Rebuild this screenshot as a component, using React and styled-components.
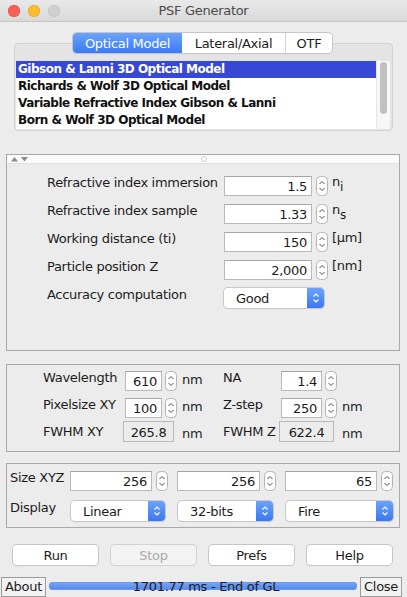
import styled, { createGlobalStyle } from "styled-components";

const GlobalStyle = createGlobalStyle`
  html, body {
    margin: 0;
    padding: 0;
    background: #ececec;
  }
  body {
    font-family: "DejaVu Sans", "Lucida Grande", sans-serif;
    font-size: 13px;
    letter-spacing: -0.3px;
    color: #1c1c1c;
  }
`;

const models = [
  "Gibson & Lanni 3D Optical Model",
  "Richards & Wolf 3D Optical Model",
  "Variable Refractive Index Gibson & Lanni",
  "Born & Wolf 3D Optical Model",
];

function Spinner() {
  return (
    <SpinBox>
      <svg width="12" height="20" viewBox="0 0 12 20">
        <rect x="0.5" y="0.5" width="11" height="19" rx="4" fill="#fff" stroke="#b4b4b4" />
        <path d="M3.5 8 L6 5.5 L8.5 8" fill="none" stroke="#4a4a4a" strokeWidth="1" />
        <path d="M3.5 12 L6 14.5 L8.5 12" fill="none" stroke="#4a4a4a" strokeWidth="1" />
      </svg>
    </SpinBox>
  );
}

function Combo({ value, width }) {
  return (
    <ComboBox $width={width}>
      <span>{value}</span>
      <ComboArrow>
        <svg width="8" height="12" viewBox="0 0 8 12">
          <path d="M1.5 4.5 L4 2 L6.5 4.5" fill="none" stroke="#fff" strokeWidth="1.2" />
          <path d="M1.5 7.5 L4 10 L6.5 7.5" fill="none" stroke="#fff" strokeWidth="1.2" />
        </svg>
      </ComboArrow>
    </ComboBox>
  );
}

export default function App() {
  return (
    <Window>
      <GlobalStyle />
      <TitleBar>
        <Lights>
          <Light $color="#fc5f57" $edge="#de4a42" />
          <Light $color="#fdbc2e" $edge="#dea123" />
          <Light $color="#d0d0d0" $edge="#bdbdbd" />
        </Lights>
        <Title>PSF Generator</Title>
        <span />
      </TitleBar>

      <Tabs>
        <Tab $active $width={109}>Optical Model</Tab>
        <Tab $width={103}>Lateral/Axial</Tab>
        <Tab $width={46} $last>OTF</Tab>
      </Tabs>

      <TabPanel>
        <ModelList>
          <Items>
            {models.map((m, i) => (
              <Item key={m} $selected={i === 0}>{m}</Item>
            ))}
          </Items>
          <ScrollTrack>
            <ScrollThumb />
          </ScrollTrack>
        </ModelList>
      </TabPanel>

      <SplitBox>
        <Divider>
          <Arrows>
            <svg width="20" height="6" viewBox="0 0 20 6">
              <path d="M0 5.5 L3.5 1 L7 5.5 Z" fill="#8a8a8a" />
              <path d="M10 1 L17 1 L13.5 5.5 Z" fill="#8a8a8a" />
            </svg>
          </Arrows>
          <Knob />
        </Divider>
        <ParamGrid>
          <Label>Refractive index immersion</Label>
          <Field>1.5</Field>
          <Spinner />
          <Unit>n<Sub>i</Sub></Unit>

          <Label>Refractive index sample</Label>
          <Field>1.33</Field>
          <Spinner />
          <Unit>n<Sub>s</Sub></Unit>

          <Label>Working distance (ti)</Label>
          <Field>150</Field>
          <Spinner />
          <Unit>[µm]</Unit>

          <Label>Particle position Z</Label>
          <Field>2,000</Field>
          <Spinner />
          <Unit>[nm]</Unit>

          <Label>Accuracy computation</Label>
          <ComboCell>
            <Combo value="Good" width={100} />
          </ComboCell>
        </ParamGrid>
      </SplitBox>

      <Box $mt={13} $height={88}>
        <OpticsGrid>
          <Label>Wavelength</Label>
          <Field>610</Field>
          <Spinner />
          <PlainUnit>nm</PlainUnit>
          <Label>NA</Label>
          <Field>1.4</Field>
          <Spinner />
          <PlainUnit />

          <Label>Pixelsize XY</Label>
          <Field>100</Field>
          <Spinner />
          <PlainUnit>nm</PlainUnit>
          <Label>Z-step</Label>
          <Field>250</Field>
          <Spinner />
          <PlainUnit>nm</PlainUnit>

          <Label>FWHM XY</Label>
          <ReadOnly>265.8</ReadOnly>
          <PlainUnit>nm</PlainUnit>
          <Label>FWHM Z</Label>
          <ReadOnly>622.4</ReadOnly>
          <PlainUnit>nm</PlainUnit>
        </OpticsGrid>
      </Box>

      <Box $mt={11} $height={65}>
        <SizeGrid>
          <Label>Size XYZ</Label>
          <Cell $gap={9}>
            <Field>256</Field>
            <Spinner />
          </Cell>
          <Cell $gap={9}>
            <Field>256</Field>
            <Spinner />
          </Cell>
          <Cell $gap={0}>
            <Field>65</Field>
            <Spinner />
          </Cell>

          <Label>Display</Label>
          <Cell $gap={12}>
            <Combo value="Linear" />
          </Cell>
          <Cell $gap={12}>
            <Combo value="32-bits" />
          </Cell>
          <Cell $gap={0}>
            <Combo value="Fire" />
          </Cell>
        </SizeGrid>
      </Box>

      <Buttons>
        <Button>Run</Button>
        <Button $disabled>Stop</Button>
        <Button>Prefs</Button>
        <Button>Help</Button>
      </Buttons>

      <StatusBar>
        <SmallButton>About</SmallButton>
        <Progress>
          <ProgressText>1701.77 ms - End of GL</ProgressText>
        </Progress>
        <SmallButton>Close</SmallButton>
      </StatusBar>
    </Window>
  );
}

const Window = styled.div`
  width: 407px;
  height: 597px;
  background: #ececec;
  display: flex;
  flex-direction: column;
  overflow: hidden;
`;

const TitleBar = styled.div`
  height: 21px;
  border-bottom: 1px solid #c4c4c4;
  background: linear-gradient(#e9e9e9, #d9d9d9);
  display: grid;
  grid-template-columns: 1fr auto 1fr;
  align-items: center;
`;

const Lights = styled.div`
  display: flex;
  gap: 8px;
  padding-left: 8px;
`;

const Light = styled.span`
  width: 12px;
  height: 12px;
  border-radius: 50%;
  background: ${(p) => p.$color};
  box-shadow: inset 0 0 0 0.5px ${(p) => p.$edge};
`;

const Title = styled.div`
  color: #4a4a4a;
  font-size: 13px;
`;

const Tabs = styled.div`
  margin-top: 11px;
  height: 20px;
  align-self: center;
  margin-left: -2px;
  display: flex;
  background: #fff;
  border-radius: 4px;
  box-shadow: 0 0 0 1px #c6c6c6, 0 1px 1px rgba(0, 0, 0, 0.12);
  position: relative;
  z-index: 1;
`;

const Tab = styled.div`
  width: ${(p) => p.$width}px;
  display: flex;
  align-items: center;
  justify-content: center;
  color: ${(p) => (p.$active ? "#fff" : "#1c1c1c")};
  background: ${(p) => (p.$active ? "linear-gradient(#6ba3fb, #3a7af6)" : "transparent")};
  border-radius: ${(p) => (p.$active ? "4px 0 0 4px" : "0")};
  border-left: ${(p) => (p.$last ? "1px solid #d4d4d4" : "none")};
`;

const TabPanel = styled.div`
  margin: -10px 14px 0;
  border: 1px solid #d3d3d3;
  border-radius: 4px;
  background: #e4e4e4;
  padding: 17px 2px 1px 1px;
  box-sizing: content-box;
  height: 68px;
`;

const ModelList = styled.div`
  display: flex;
  height: 68px;
  background: #fff;
`;

const Items = styled.div`
  flex: 1;
  display: flex;
  flex-direction: column;
`;

const Item = styled.div`
  height: 17px;
  line-height: 17px;
  padding-left: 2px;
  font-size: 12px;
  font-weight: bold;
  letter-spacing: -0.5px;
  color: ${(p) => (p.$selected ? "#fff" : "#111")};
  background: ${(p) => (p.$selected ? "#3848d6" : "transparent")};
`;

const ScrollTrack = styled.div`
  width: 14px;
  background: #f7f7f7;
  border-left: 1px solid #e6e6e6;
  padding: 1px 3px 0 3px;
  box-sizing: border-box;
`;

const ScrollThumb = styled.div`
  height: 52px;
  border-radius: 4px;
  background: #c1c1c1;
`;

const SplitBox = styled.div`
  margin: 23px 7px 0 6px;
  height: 195px;
  border: 1px solid #a9a9a9;
  display: flex;
  flex-direction: column;
`;

const Divider = styled.div`
  height: 8px;
  background: #fbfbfb;
  border-bottom: 1px solid #e2e2e2;
  display: flex;
  align-items: center;
  justify-content: center;
  position: relative;
`;

const Arrows = styled.div`
  position: absolute;
  left: 4px;
  top: 1px;
  line-height: 0;
`;

const Knob = styled.span`
  width: 4px;
  height: 4px;
  border-radius: 50%;
  border: 1px solid #cfcfcf;
  margin-left: 2px;
`;

const ParamGrid = styled.div`
  display: grid;
  grid-template-columns: 173px 88px 12px auto;
  grid-auto-rows: 20px;
  column-gap: 4px;
  row-gap: 8px;
  padding: 12px 0 0 40px;
  align-items: start;
`;

const Label = styled.div`
  line-height: 14px;
  white-space: nowrap;
`;

const Field = styled.div`
  height: 20px;
  box-sizing: border-box;
  background: #fff;
  border: 1px solid #b9b9b9;
  border-top-color: #a6a6a6;
  text-align: right;
  padding-right: 4px;
  line-height: 20px;
  flex: 1;
`;

const SpinBox = styled.div`
  width: 12px;
  height: 20px;
  line-height: 0;
`;

const Unit = styled.div`
  line-height: 12px;
  white-space: nowrap;
`;

const Sub = styled.sub`
  font-size: 12px;
  vertical-align: -5px;
`;

const PlainUnit = styled.div`
  padding-left: 5px;
  line-height: 18px;
`;

const ComboCell = styled.div`
  grid-column: 2 / span 3;
`;

const ComboBox = styled.div`
  width: ${(p) => (p.$width ? `${p.$width}px` : "100%")};
  height: 20px;
  box-sizing: border-box;
  display: flex;
  align-items: center;
  background: #fff;
  border-radius: 4px;
  box-shadow: 0 0 0 1px #c8c8c8, 0 1px 1px rgba(0, 0, 0, 0.15);
  overflow: hidden;

  span {
    flex: 1;
    padding-left: 12px;
  }
`;

const ComboArrow = styled.div`
  width: 17px;
  height: 100%;
  display: flex;
  align-items: center;
  justify-content: center;
  background: linear-gradient(#6ba3fb, #3a77f4);
`;

const Box = styled.div`
  margin: ${(p) => p.$mt}px 7px 0 6px;
  height: ${(p) => p.$height - 2}px;
  border: 1px solid #a9a9a9;
`;

const OpticsGrid = styled.div`
  display: grid;
  grid-template-columns: 82px 40px 12px 46px 58px 44px 12px auto;
  grid-template-rows: 20px 20px 21px;
  row-gap: 7px;
  padding: 6px 0 0 36px;
  align-items: start;

  & > ${Field} {
    margin-right: 3px;
  }
  & > ${SpinBox} {
    justify-self: end;
  }
`;

const ReadOnly = styled.div`
  grid-column: span 2;
  height: 21px;
  box-sizing: border-box;
  border: 1px solid #b9b9b9;
  background: #ececec;
  text-align: center;
  line-height: 22px;
  margin-left: -2px;
  margin-right: 3px;
  margin-top: -4px;
`;

const SizeGrid = styled.div`
  display: grid;
  grid-template-columns: 60px 107px 108px 1fr;
  grid-template-rows: 20px 20px;
  row-gap: 10px;
  padding: 7px 6px 0 3px;
  align-items: start;
`;

const Cell = styled.div`
  display: flex;
  gap: 4px;
  margin-right: ${(p) => p.$gap}px;

  & > ${ComboBox} {
    margin-left: 1px;
  }
`;

const Buttons = styled.div`
  margin: 17px 15px 0 13px;
  display: grid;
  grid-template-columns: repeat(4, 85px);
  justify-content: space-between;
`;

const Button = styled.div`
  height: 20px;
  box-sizing: border-box;
  border-radius: 4px;
  background: ${(p) => (p.$disabled ? "#f3f3f3" : "#fff")};
  color: ${(p) => (p.$disabled ? "#a9a9a9" : "#1c1c1c")};
  box-shadow: 0 0 0 1px ${(p) => (p.$disabled ? "#d2d2d2" : "#c6c6c6")},
    0 1px 1px rgba(0, 0, 0, ${(p) => (p.$disabled ? 0.06 : 0.15)});
  display: flex;
  align-items: center;
  justify-content: center;
`;

const StatusBar = styled.div`
  margin-top: 12px;
  height: 20px;
  display: flex;
  align-items: stretch;
  gap: 2px;
  padding: 0 5px 0 1px;
`;

const SmallButton = styled.div`
  border: 1px solid #9c9c9c;
  background: #f2f2f2;
  padding: 0 3px;
  line-height: 18px;
`;

const Progress = styled.div`
  flex: 1;
  margin: 5px 1px 0;
  height: 8px;
  border-radius: 4px;
  background: linear-gradient(#7aa7f7, #5186ec);
  box-shadow: inset 0 0 0 1px #6a98f0;
  display: flex;
  align-items: center;
  justify-content: center;
`;

const ProgressText = styled.span`
  font-size: 13px;
  color: #1c1c1c;
  white-space: nowrap;
  margin-left: 6px;
`;
